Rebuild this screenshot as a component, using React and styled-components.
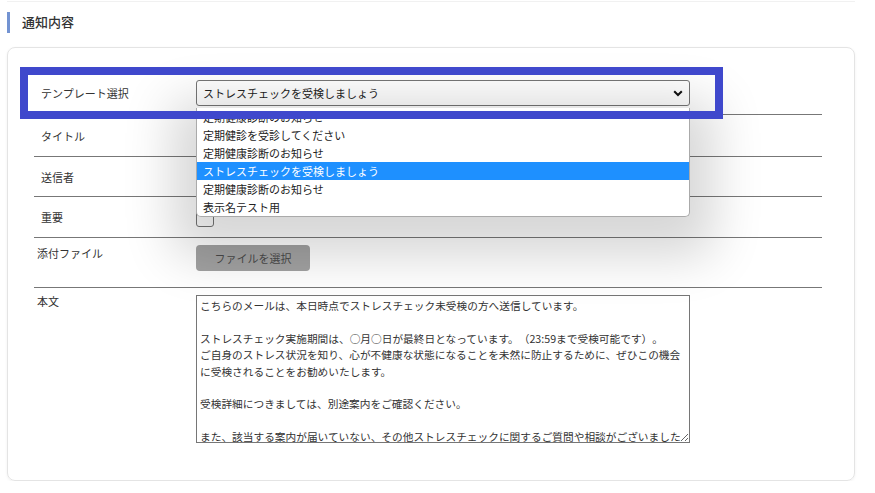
import React from 'react';
import styled, { createGlobalStyle } from 'styled-components';

const GlobalStyle = createGlobalStyle`
    html, body {
        margin: 0;
        background: #fff;
        font-family: "Noto Sans CJK JP", "Noto Sans", sans-serif;
        color: #333;
    }
`;

const Page = styled.div`
    width: 848px;
    padding-left: 7px;
`;

const TopRule = styled.div`
    height: 1px;
    margin-top: 1px;
    background: #f1f1f1;
`;

const SectionTitle = styled.h2`
    margin: 10px 0 0;
    height: 21px;
    border-left: 3px solid #7393d2;
    padding-left: 12px;
    font-size: 13px;
    font-weight: 500;
    line-height: 19px;
    color: #333;
`;

const Card = styled.div`
    position: relative;
    box-sizing: border-box;
    margin-top: 14px;
    height: 434px;
    border: 1px solid #e4e4e4;
    border-radius: 8px;
    box-shadow: 0 1px 3px rgba(0, 0, 0, 0.06);
    padding: 24px 32px 0 26px;
`;

const Highlight = styled.div`
    position: absolute;
    left: 12px;
    top: 19px;
    width: 687px;
    height: 36px;
    border: 8px solid #3f48cc;
    z-index: 3;
    pointer-events: none;
`;

const Row = styled.div`
    display: grid;
    grid-template-columns: 162px 1fr;
    align-items: ${p => (p.$top ? 'start' : 'center')};
    height: ${p => p.$h}px;
    border-bottom: ${p => (p.$last ? 'none' : '1px solid #777')};
`;

const Label = styled.div`
    font-size: 11px;
    color: #333;
    padding-left: ${p => (p.$top ? 3 : 7)}px;
    padding-top: ${p => (p.$top ? p.$pt : 0)}px;
`;

const Field = styled.div`
    position: relative;
    padding-top: ${p => p.$pt || 0}px;
`;

const Select = styled.div`
    box-sizing: border-box;
    width: 494px;
    height: 26px;
    border: 1px solid #767676;
    border-radius: 3px;
    display: flex;
    align-items: center;
    justify-content: space-between;
    padding: 0 6px 0 6px;
    font-size: 11px;
    color: #222;
    background: #fff;
`;

const Dropdown = styled.ul`
    position: absolute;
    left: 0;
    top: 28px;
    box-sizing: border-box;
    width: 494px;
    height: 109px;
    margin: 0;
    padding: 0;
    list-style: none;
    background: #fff;
    border: 1px solid #aaa;
    border-top: none;
    border-radius: 0 0 5px 5px;
    box-shadow: 0 16px 50px 24px rgba(0, 0, 0, 0.16);
    overflow: hidden;
    z-index: 2;
`;

const Option = styled.li`
    height: 18px;
    line-height: 18px;
    padding-left: 6px;
    font-size: 11px;
    color: ${p => (p.$selected ? '#fff' : '#222')};
    background: ${p => (p.$selected ? '#1e90ff' : 'transparent')};
    white-space: nowrap;
`;

const Checkbox = styled.span`
    display: block;
    box-sizing: border-box;
    width: 18px;
    height: 18px;
    margin-top: 2px;
    border: 1px solid #767676;
    border-radius: 3px;
    background: #fff;
`;

const FileButton = styled.button`
    width: 114px;
    height: 26px;
    border: none;
    border-radius: 4px;
    background: #a2a2a2;
    color: #4a4a4a;
    font-family: inherit;
    font-size: 11px;
    padding: 0;
`;

const BodyText = styled.textarea`
    display: block;
    box-sizing: border-box;
    width: 494px;
    height: 148px;
    border: 1px solid #767676;
    border-radius: 0;
    padding: 2px 3px;
    margin: 0;
    font-family: "Noto Sans CJK JP", sans-serif;
    font-size: 10.7px;
    line-height: 16.4px;
    color: #333;
    text-spacing-trim: space-all;
    overflow: hidden;
    resize: both;
    outline: none;
`;

const Chevron = () => (
    <svg width="10" height="7" viewBox="0 0 10 7">
        <path d="M1.2 1.2 L5 5 L8.8 1.2" fill="none" stroke="#111" strokeWidth="2" />
    </svg>
);

const options = [
    '定期健康診断のお知らせ',
    '定期健診を受診してください',
    '定期健康診断のお知らせ',
    'ストレスチェックを受検しましょう',
    '定期健康診断のお知らせ',
    '表示名テスト用',
];

const body = `こちらのメールは、本日時点でストレスチェック未受検の方へ送信しています。

ストレスチェック実施期間は、○月○日が最終日となっています。（23:59まで受検可能です）。
ご自身のストレス状況を知り、心が不健康な状態になることを未然に防止するために、ぜひこの機会に受検されることをお勧めいたします。

受検詳細につきましては、別途案内をご確認ください。

また、該当する案内が届いていない、その他ストレスチェックに関するご質問や相談がございましたら、下記までお問い合わせください。`;

export default function App() {
    return (
        <Page>
            <GlobalStyle />
            <TopRule />
            <SectionTitle>通知内容</SectionTitle>
            <Card>
                <Highlight />
                <Row $h={42}>
                    <Label>テンプレート選択</Label>
                    <Field>
                        <Select>
                            <span>ストレスチェックを受検しましょう</span>
                            <Chevron />
                        </Select>
                        <Dropdown>
                            {options.map((o, i) => (
                                <Option key={i} $selected={i === 3}>{o}</Option>
                            ))}
                        </Dropdown>
                    </Field>
                </Row>
                <Row $h={41}>
                    <Label>タイトル</Label>
                    <Field />
                </Row>
                <Row $h={39}>
                    <Label>送信者</Label>
                    <Field />
                </Row>
                <Row $h={40}>
                    <Label>重要</Label>
                    <Field>
                        <Checkbox />
                    </Field>
                </Row>
                <Row $h={49} $top>
                    <Label $top $pt={7}>添付ファイル</Label>
                    <Field $pt={6}>
                        <FileButton>ファイルを選択</FileButton>
                    </Field>
                </Row>
                <Row $h={160} $top $last>
                    <Label $top $pt={5}>本文</Label>
                    <Field $pt={7}>
                        <BodyText readOnly defaultValue={body} />
                    </Field>
                </Row>
            </Card>
        </Page>
    );
}
